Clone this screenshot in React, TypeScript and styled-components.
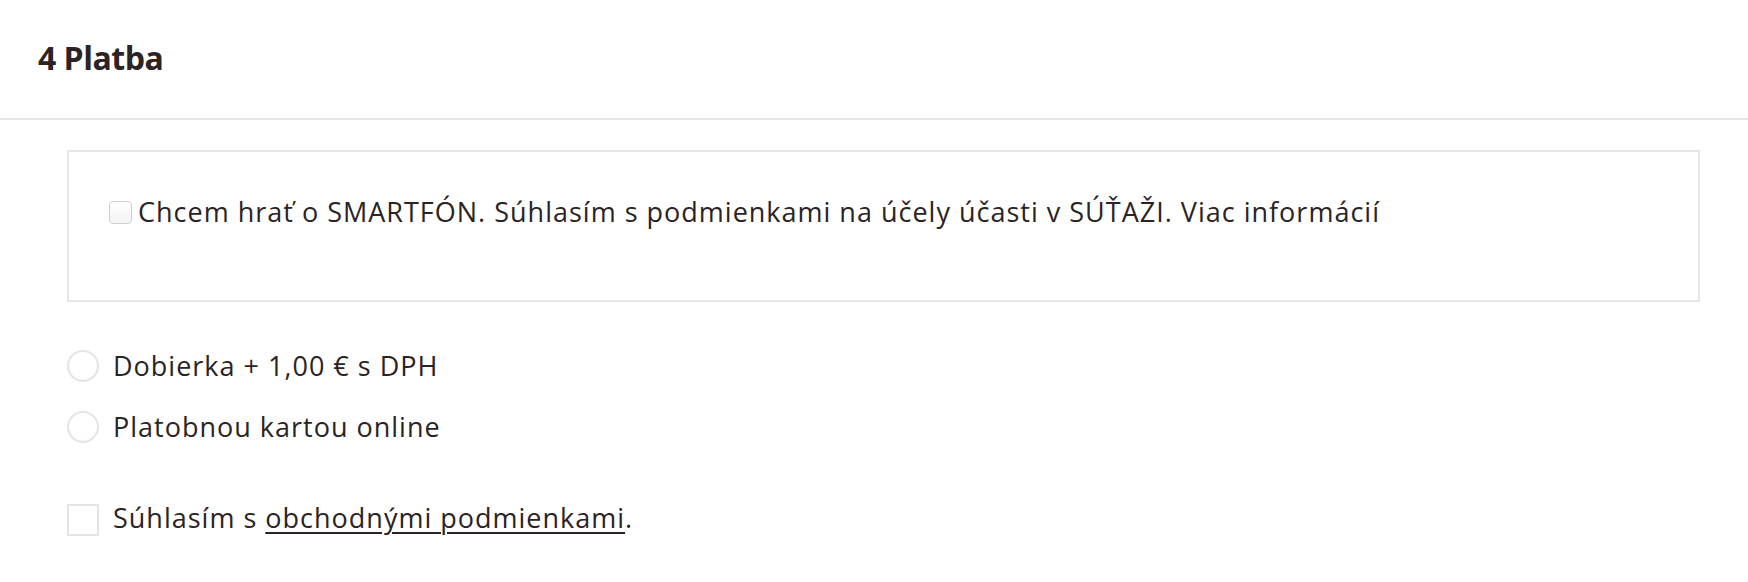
import React from "react";
import styled, { createGlobalStyle } from "styled-components";

const Global = createGlobalStyle`
  html, body {
    margin: 0;
    padding: 0;
    background: #ffffff;
  }
  body {
    font-family: "Open Sans", "Noto Sans", Arial, sans-serif;
    color: #2b2324;
  }
`;

const Page = styled.div`
  width: 100%;
  display: flex;
  flex-direction: column;
`;

const Header = styled.header`
  padding: 38px 38px 40px;
  border-bottom: 2px solid #e6e6e6;
`;

const Heading = styled.h2`
  margin: 0;
  font-size: 32px;
  line-height: 40px;
  font-weight: 700;
  letter-spacing: -0.5px;
  color: #2b2324;
`;

const Body = styled.div`
  padding: 30px 48px 40px 67px;
  display: flex;
  flex-direction: column;
`;

const PromoBox = styled.div`
  border: 2px solid #e6e6e6;
  padding: 40px 40px 69px;
`;

const Label = styled.label`
  display: flex;
  align-items: center;
  font-size: 27px;
  line-height: 39px;
  letter-spacing: 1px;
  color: #2b2324;
  cursor: pointer;
`;

const SmallCheck = styled.input.attrs({ type: "checkbox" })`
  appearance: none;
  -webkit-appearance: none;
  margin: 0 6px 0 0;
  width: 23px;
  height: 23px;
  flex: none;
  border: 1.5px solid #cfcfcf;
  border-radius: 4px;
  background: linear-gradient(#ffffff, #f3f3f3);
  box-sizing: border-box;
  transform: translateY(1px);
`;

const Options = styled.div`
  margin-top: 44px;
  display: flex;
  flex-direction: column;
  gap: 22px;
`;

const Radio = styled.input.attrs({ type: "radio" })`
  appearance: none;
  -webkit-appearance: none;
  margin: 0 14px 0 0;
  width: 32px;
  height: 32px;
  flex: none;
  border-radius: 50%;
  border: 2px solid #e4e4e4;
  background: #ffffff;
  box-shadow: inset 0 -1px 1px rgba(0, 0, 0, 0.03);
  box-sizing: border-box;
`;

const Terms = styled.div`
  margin-top: 52px;
`;

const SquareCheck = styled.input.attrs({ type: "checkbox" })`
  appearance: none;
  -webkit-appearance: none;
  margin: 0 14px 0 0;
  width: 32px;
  height: 32px;
  flex: none;
  border: 2px solid #e4e4e4;
  background: #ffffff;
  box-sizing: border-box;
  transform: translateY(2px);
`;

const Link = styled.a`
  color: #2b2324;
  text-decoration: underline;
  text-decoration-thickness: 2px;
  text-underline-offset: 4px;
`;

export default function App() {
  return (
    <Page>
      <Global />
      <Header>
        <Heading>4 Platba</Heading>
      </Header>
      <Body>
        <PromoBox>
          <Label>
            <SmallCheck />
            Chcem hrať o SMARTFÓN. Súhlasím s podmienkami na účely účasti v SÚŤAŽI. Viac informácií
          </Label>
        </PromoBox>
        <Options>
          <Label>
            <Radio name="payment" />
            Dobierka + 1,00 € s DPH
          </Label>
          <Label>
            <Radio name="payment" />
            Platobnou kartou online
          </Label>
        </Options>
        <Terms>
          <Label>
            <SquareCheck />
            <span>
              Súhlasím s <Link href="#">obchodnými podmienkami</Link>.
            </span>
          </Label>
        </Terms>
      </Body>
    </Page>
  );
}
